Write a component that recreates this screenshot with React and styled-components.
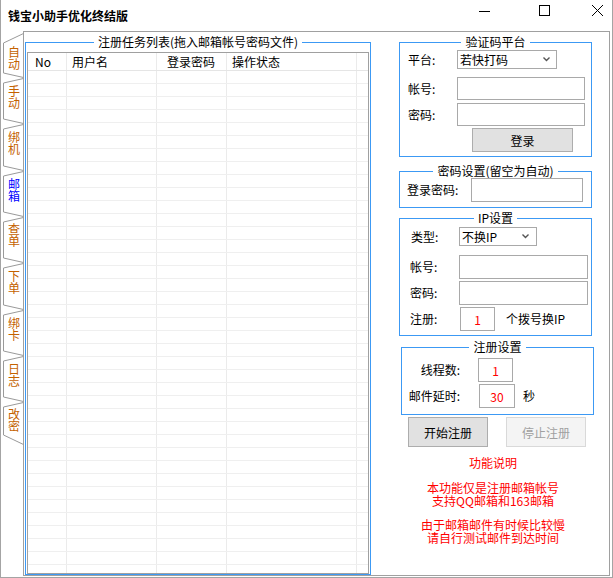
import React from 'react'
import styled, { createGlobalStyle } from 'styled-components'

const GlobalStyle = createGlobalStyle`
  html, body {
    margin: 0;
    padding: 0;
    background: #fff;
  }
  body {
    font-family: "Noto Sans CJK SC", "Noto Sans", sans-serif;
    font-size: 12px;
    color: #000;
  }
  * {
    box-sizing: border-box;
  }
`

const Window = styled.div`
  width: 613px;
  height: 578px;
  border: 1px solid #a4a4a4;
  border-top: none;
  display: flex;
  flex-direction: column;
  background: #fff;
  overflow: hidden;
`

const TitleBar = styled.div`
  height: 31px;
  flex: none;
  display: flex;
  align-items: center;
  padding-left: 7px;
`

const Title = styled.div`
  font-weight: bold;
  font-size: 12px;
  line-height: 14px;
`

const Controls = styled.div`
  margin-left: auto;
  align-self: flex-start;
  display: flex;
  padding-top: 5px;
  padding-right: 9px;
`

const ControlIcon = styled.svg`
  display: block;
  width: 11px;
  height: 11px;
  margin-left: ${p => p.$gap || 0}px;
`

const Body = styled.div`
  flex: 1;
  display: flex;
  padding: 0 2px 1px 0;
`

const TabStrip = styled.div`
  width: 22px;
  flex: none;
  padding: 2px 0 0 2px;
  display: flex;
  flex-direction: column;
`

const Tab = styled.div`
  position: relative;
  flex: none;
  width: 20px;
  height: ${p => p.$h}px;
  padding: ${p => p.$pad}px 0 0 5px;
  color: ${p => (p.$active ? '#0000ff' : '#c46200')};
`

const TabOutline = styled.svg`
  position: absolute;
  left: 0;
  top: 0;
  overflow: visible;
`

const TabText = styled.div`
  position: relative;
  width: 12px;
  font-size: 12px;
  line-height: 12px;
  word-break: break-all;
`

const TabPanel = styled.div`
  flex: 1;
  border: 1px solid #a0a0a0;
  display: flex;
  align-items: flex-start;
`

const GroupBox = styled.fieldset`
  flex: none;
  margin: ${p => p.$top || 0}px 0 0 ${p => p.$left || 0}px;
  padding: ${p => p.$pad || '0'};
  border: 1px solid #3c99f4;
  width: ${p => p.$w}px;
  height: ${p => p.$h}px;
  min-width: 0;
`

const Legend = styled.legend`
  margin: 0 auto;
  padding: 0 4px;
  font-size: 12px;
  line-height: 14px;
`

const ListView = styled.div`
  width: 342px;
  height: 522px;
  border: 1px solid #a0a0a0;
  overflow: hidden;
`

const GridRow = styled.div`
  display: grid;
  grid-template-columns: 39px 90px 70px 130px 1fr;
  height: ${p => (p.$head ? 18 : 13)}px;
  border-bottom: 1px solid ${p => (p.$head ? '#e5e5e5' : '#efefef')};
`

const Cell = styled.div`
  border-right: 1px solid #ebebeb;
  padding-left: ${p => p.$pl || 0}px;
  line-height: 17px;
  white-space: nowrap;
  overflow: hidden;

  &:last-child {
    border-right: none;
  }
`

const SideColumn = styled.div`
  flex: none;
  margin-left: 28px;
  width: 195px;
  display: flex;
  flex-direction: column;
`

const FormRow = styled.div`
  display: flex;
  align-items: center;
  height: ${p => p.$h}px;
  margin-top: ${p => p.$mt || 0}px;
`

const FieldLabel = styled.span`
  flex: none;
  width: ${p => p.$w}px;
  padding-left: ${p => p.$pl || 0}px;
  text-align: ${p => p.$align || 'left'};
  white-space: nowrap;
  line-height: 14px;
`

const TextBox = styled.input`
  flex: none;
  width: ${p => p.$w}px;
  height: 100%;
  margin: 0 0 0 ${p => p.$ml || 0}px;
  padding: 0 3px;
  border: 1px solid #a9a9a9;
  background: #fff;
  font: inherit;
  font-size: 12px;
  color: #ff0000;
  text-align: ${p => (p.$center ? 'center' : 'left')};
  outline: none;
`

const ComboBox = styled.div`
  flex: none;
  width: ${p => p.$w}px;
  height: 100%;
  display: flex;
  align-items: center;
  padding: 0 ${p => p.$pr}px 0 2px;
  border: 1px solid #a9a9a9;
  background: #fff;
  line-height: 14px;
`

const ComboText = styled.span`
  flex: 1;
  white-space: nowrap;
`

const Suffix = styled.span`
  margin-left: ${p => p.$ml}px;
  white-space: nowrap;
  line-height: 14px;
`

const PushButton = styled.button`
  flex: none;
  width: ${p => p.$w}px;
  height: ${p => p.$h}px;
  margin: 0 0 0 ${p => p.$ml || 0}px;
  padding: 0;
  border: 1px solid #adadad;
  background: #e1e1e1;
  font-family: inherit;
  font-size: 12px;
  color: #000;

  &:disabled {
    background: #f4f4f4;
    border-color: #d9d9d9;
    color: #a0a0a0;
  }
`

const ButtonRow = styled.div`
  display: flex;
  margin-top: 2px;
  padding-left: 9px;
  gap: 18px;
`

const Notes = styled.div`
  padding-right: 7px;
  text-align: center;
  color: #ff0000;
  white-space: nowrap;
`

const NoteBlock = styled.p`
  margin: ${p => p.$mt || 0}px 0 0;
  line-height: 13px;
`

const Chevron = () => (
  <svg width="7" height="5" viewBox="0 0 7 5">
    <polyline points="0.5,0.5 3.5,3.5 6.5,0.5" fill="none" stroke="#555" strokeWidth="1.4" />
  </svg>
)

const tabs = [
  { label: '自动', h: 45, pad: 13, top: 10 },
  { label: '手动', h: 46, pad: 7 },
  { label: '绑机', h: 47, pad: 7 },
  { label: '邮箱', h: 46, pad: 7, active: true },
  { label: '查单', h: 46, pad: 6 },
  { label: '下单', h: 47, pad: 7 },
  { label: '绑卡', h: 46, pad: 7 },
  { label: '日志', h: 46, pad: 7 },
  { label: '改密', h: 43, pad: 6, bottom: 10 },
]

const columns = [
  { title: 'No', pl: 7 },
  { title: '用户名', pl: 5 },
  { title: '登录密码', pl: 10 },
  { title: '操作状态', pl: 5 },
  { title: '', pl: 0 },
]

const rows = Array.from({ length: 40 }, (_, i) => i)

const App = () => {
  return (
    <>
      <GlobalStyle />
      <Window>
        <TitleBar>
          <Title>钱宝小助手优化终结版</Title>
          <Controls>
            <ControlIcon viewBox="0 0 11 11">
              <line x1="0" y1="6.5" x2="11" y2="6.5" stroke="#000" />
            </ControlIcon>
            <ControlIcon viewBox="0 0 11 11" $gap={49}>
              <rect x="0.5" y="0.5" width="10" height="10" fill="none" stroke="#000" />
            </ControlIcon>
            <ControlIcon viewBox="0 0 11 11" $gap={42}>
              <line x1="0" y1="0" x2="11" y2="11" stroke="#000" />
              <line x1="11" y1="0" x2="0" y2="11" stroke="#000" />
            </ControlIcon>
          </Controls>
        </TitleBar>

        <Body>
          <TabStrip>
            {tabs.map(t => {
              const a = t.top || 5
              const b = t.bottom || 5
              return (
                <Tab key={t.label} $h={t.h} $pad={t.pad} $active={t.active}>
                  <TabOutline width="20" height={t.h} viewBox={`0 0 20 ${t.h}`}>
                    <polyline
                      points={`20.5,0.5 0.5,${a} 0.5,${t.h - b} 20.5,${t.h - 0.5}`}
                      fill="none"
                      stroke="#9a9a9a"
                    />
                  </TabOutline>
                  <TabText>{t.label}</TabText>
                </Tab>
              )
            })}
          </TabStrip>

          <TabPanel>
            <GroupBox $top={3} $left={1} $w={346} $h={540} $pad="3px 1px 0 1px">
              <Legend>注册任务列表(拖入邮箱帐号密码文件)</Legend>
              <ListView>
                <GridRow $head>
                  {columns.map((c, i) => (
                    <Cell key={i} $pl={c.pl}>{c.title}</Cell>
                  ))}
                </GridRow>
                {rows.map(r => (
                  <GridRow key={r}>
                    {columns.map((c, i) => (
                      <Cell key={i} />
                    ))}
                  </GridRow>
                ))}
              </ListView>
            </GroupBox>

            <SideColumn>
              <GroupBox $top={3} $w={193} $h={122}>
                <Legend>验证码平台</Legend>
                <FormRow $h={19} $mt={1}>
                  <FieldLabel $w={57} $pl={8}>平台:</FieldLabel>
                  <ComboBox $w={100} $pr={6}>
                    <ComboText>若快打码</ComboText>
                    <Chevron />
                  </ComboBox>
                </FormRow>
                <FormRow $h={23} $mt={8}>
                  <FieldLabel $w={57} $pl={8}>帐号:</FieldLabel>
                  <TextBox $w={128} defaultValue="" />
                </FormRow>
                <FormRow $h={23} $mt={3}>
                  <FieldLabel $w={57} $pl={8}>密码:</FieldLabel>
                  <TextBox $w={128} defaultValue="" />
                </FormRow>
                <FormRow $h={24} $mt={2}>
                  <PushButton $w={101} $h={24} $ml={72}>登录</PushButton>
                </FormRow>
              </GroupBox>

              <GroupBox $top={7} $w={193} $h={44}>
                <Legend>密码设置(留空为自动)</Legend>
                <FormRow $h={24}>
                  <FieldLabel $w={71} $pl={7}>登录密码:</FieldLabel>
                  <TextBox $w={112} defaultValue="" />
                </FormRow>
              </GroupBox>

              <GroupBox $top={3} $w={193} $h={125}>
                <Legend>IP设置</Legend>
                <FormRow $h={19} $mt={2}>
                  <FieldLabel $w={59} $pl={11}>类型:</FieldLabel>
                  <ComboBox $w={78} $pr={7}>
                    <ComboText>不换IP</ComboText>
                    <Chevron />
                  </ComboBox>
                </FormRow>
                <FormRow $h={24} $mt={9}>
                  <FieldLabel $w={59} $pl={10}>帐号:</FieldLabel>
                  <TextBox $w={129} defaultValue="" />
                </FormRow>
                <FormRow $h={24} $mt={2}>
                  <FieldLabel $w={59} $pl={10}>密码:</FieldLabel>
                  <TextBox $w={129} defaultValue="" />
                </FormRow>
                <FormRow $h={24} $mt={2}>
                  <FieldLabel $w={59} $pl={10}>注册:</FieldLabel>
                  <TextBox $w={35} $ml={1} $center defaultValue="1" />
                  <Suffix $ml={11}>个拨号换IP</Suffix>
                </FormRow>
              </GroupBox>

              <GroupBox $top={4} $left={2} $w={193} $h={75}>
                <Legend>注册设置</Legend>
                <FormRow $h={24} $mt={4}>
                  <FieldLabel $w={58} $align="right">线程数:</FieldLabel>
                  <TextBox $w={35} $ml={18} $center defaultValue="1" />
                </FormRow>
                <FormRow $h={24} $mt={2}>
                  <FieldLabel $w={58} $align="right">邮件延时:</FieldLabel>
                  <TextBox $w={36} $ml={19} $center defaultValue="30" />
                  <Suffix $ml={8}>秒</Suffix>
                </FormRow>
              </GroupBox>

              <ButtonRow>
                <PushButton $w={80} $h={30}>开始注册</PushButton>
                <PushButton $w={80} $h={30} disabled>停止注册</PushButton>
              </ButtonRow>

              <Notes>
                <NoteBlock $mt={9}>功能说明</NoteBlock>
                <NoteBlock $mt={12}>
                  本功能仅是注册邮箱帐号
                  <br />
                  支持QQ邮箱和163邮箱
                </NoteBlock>
                <NoteBlock $mt={11}>
                  由于邮箱邮件有时候比较慢
                  <br />
                  请自行测试邮件到达时间
                </NoteBlock>
              </Notes>
            </SideColumn>
          </TabPanel>
        </Body>
      </Window>
    </>
  )
}

export default App
